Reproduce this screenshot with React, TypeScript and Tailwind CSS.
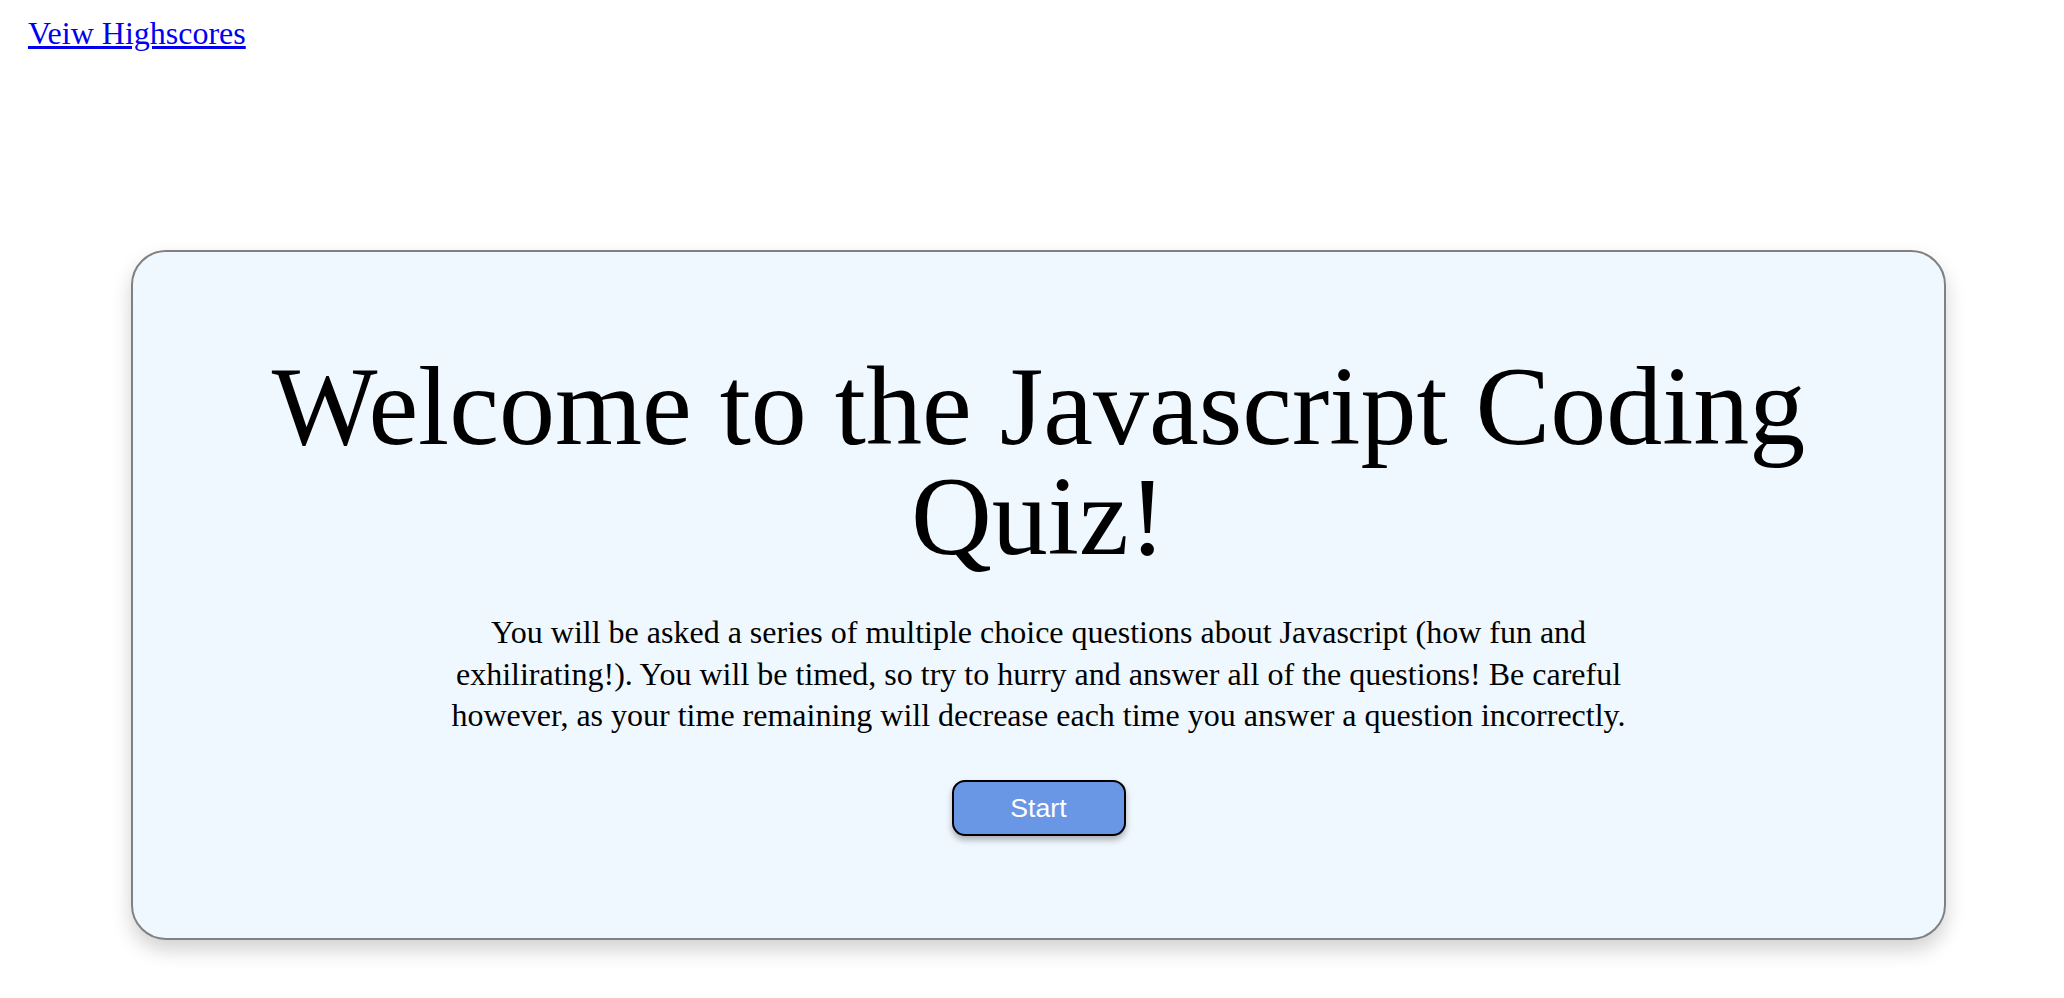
export default function App() {
  return (
    <div className="min-h-screen bg-white font-['Liberation_Serif','Times_New_Roman',serif] text-black">
      {/* Header link */}
      <div className="pl-[28px] pt-[15px]">
        <a href="#" className="text-[32px] leading-[37px] text-[#0000ee] underline">
          Veiw Highscores
        </a>
      </div>

      {/* Welcome card */}
      <div className="mt-[198px] ml-[131px] mr-[118px] rounded-[35px] border-2 border-[#808080] bg-[#f0f8ff] px-[40px] pt-[99px] pb-[102px] shadow-[0_10px_20px_rgba(0,0,0,0.18)]">
        <h1 className="text-center text-[112px] leading-[110px] font-normal">
          Welcome to the Javascript Coding Quiz!
        </h1>
        <p className="mx-auto mt-[41px] max-w-[1200px] text-center text-[32px] leading-[41.6px]">
          You will be asked a series of multiple choice questions about Javascript (how fun and
          exhilirating!). You will be timed, so try to hurry and answer all of the questions! Be
          careful however, as your time remaining will decrease each time you answer a question
          incorrectly.
        </p>
        <div className="mt-[43px] flex justify-center">
          <button className="h-[56px] w-[174px] rounded-[13px] border-2 border-black bg-[#6a96e6] font-['Liberation_Sans',Arial,sans-serif] text-[26.67px] text-white shadow-[0_4px_6px_rgba(0,0,0,0.3)]">
            Start
          </button>
        </div>
      </div>
    </div>
  );
}
